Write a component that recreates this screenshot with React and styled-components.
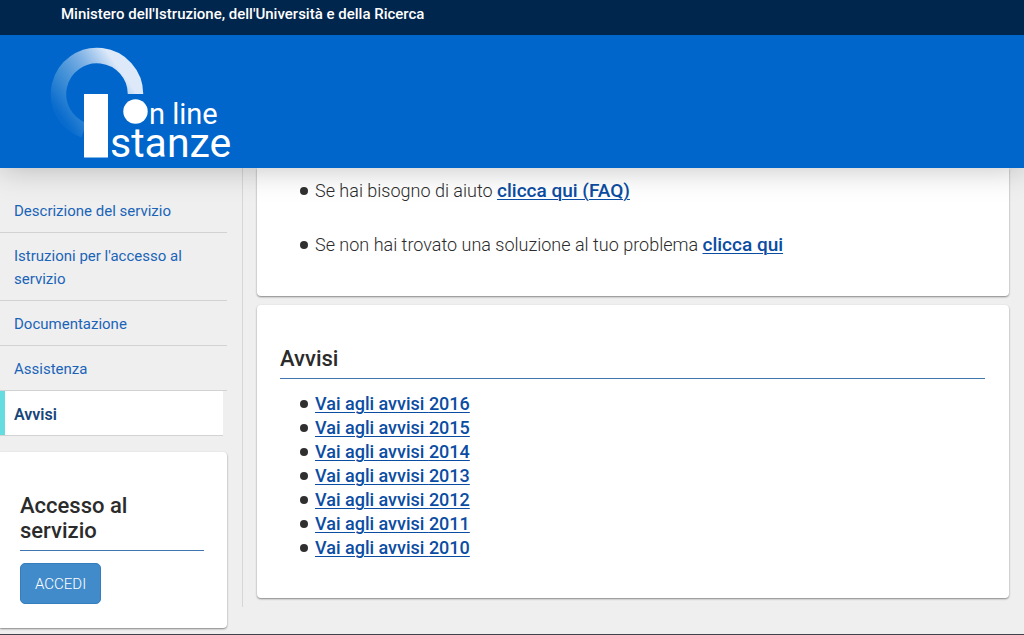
import React from 'react'
import styled, { createGlobalStyle, css } from 'styled-components'

const menu = [
    { label: 'Descrizione del servizio', href: '#descrizione' },
    { label: "Istruzioni per l'accesso al servizio", href: '#istruzioni' },
    { label: 'Documentazione', href: '#documentazione' },
    { label: 'Assistenza', href: '#assistenza' },
    { label: 'Avvisi', href: '#avvisi', active: true },
]

const years = [2016, 2015, 2014, 2013, 2012, 2011, 2010]

const App = () => {
    return (
        <Page>
            <GlobalStyle />
            <TopBar>Ministero dell'Istruzione, dell'Università e della Ricerca</TopBar>
            <Header>
                <Logo />
            </Header>
            <Layout>
                <Sidebar>
                    <nav>
                        <Menu>
                            {menu.map(({ label, href, active }) => (
                                <MenuItem key={href}>
                                    <MenuLink href={href} $active={active}>{label}</MenuLink>
                                </MenuItem>
                            ))}
                        </Menu>
                    </nav>
                    <AccessCard>
                        <Title>Accesso al servizio</Title>
                        <Button type="button">ACCEDI</Button>
                    </AccessCard>
                </Sidebar>
                <Main>
                    <HelpCard>
                        <HelpList>
                            <li>Se hai bisogno di aiuto <HelpLink href="#faq">clicca qui (FAQ)</HelpLink></li>
                            <li>Se non hai trovato una soluzione al tuo problema <HelpLink href="#contatti">clicca qui</HelpLink></li>
                        </HelpList>
                    </HelpCard>
                    <NewsCard id="avvisi">
                        <Title>Avvisi</Title>
                        <NewsList>
                            {years.map(year => (
                                <li key={year}>
                                    <Link href={`#avvisi-${year}`}>Vai agli avvisi {year}</Link>
                                </li>
                            ))}
                        </NewsList>
                    </NewsCard>
                </Main>
            </Layout>
            <Footer />
        </Page>
    )
}

const Logo = () => (
    <LogoSvg viewBox="0 0 190 121" role="img" aria-label="Istanze on line">
        <defs>
            <linearGradient id="ring" gradientUnits="userSpaceOnUse" x1="88" y1="48" x2="26" y2="92">
                <stop offset="0" stopColor="#e9f0fb" stopOpacity="0.95" />
                <stop offset="0.35" stopColor="#a9cbee" stopOpacity="0.72" />
                <stop offset="0.7" stopColor="#7fb8e0" stopOpacity="0.45" />
                <stop offset="1" stopColor="#7fb8e0" stopOpacity="0.06" />
            </linearGradient>
        </defs>
        <path d="M85.5 47A38.5 38.5 0 1 0 34 83.3" fill="none" stroke="url(#ring)" strokeWidth="15.5" />
        <rect x="34" y="47" width="24" height="63.5" fill="#fff" />
        <circle cx="85.5" cy="64.5" r="12.2" fill="#fff" />
        <LogoText x="99" y="77" fontSize="29">n line</LogoText>
        <LogoText x="60" y="110" fontSize="41">stanze</LogoText>
    </LogoSvg>
)

const GlobalStyle = createGlobalStyle`
    * {
        box-sizing: border-box;
    }
    body {
        margin: 0;
        background: #efefef;
        color: #2b2b2b;
        font-family: Roboto, "Open Sans", sans-serif;
        font-size: 15px;
    }
`
const Page = styled.div`
    display: flex;
    flex-direction: column;
    min-height: 100vh;
`
const TopBar = styled.div`
    position: relative;
    z-index: 2;
    padding: 4px 61px 11px;
    background: #00264d;
    color: #fff;
    font-weight: 500;
    line-height: 20px;
`
const Header = styled.header`
    position: relative;
    z-index: 1;
    padding: 12px 50px 0;
    background: #0066cc;
    box-shadow: 0 0 30px rgba(0, 0, 0, 0.25);
`
const LogoSvg = styled.svg`
    display: block;
    width: 190px;
    height: 121px;
`
const LogoText = styled.text`
    fill: #fff;
    font-family: Roboto, sans-serif;
`
const Layout = styled.div`
    display: grid;
    grid-template-columns: 242px 1fr;
    flex: 1;
`
const Sidebar = styled.aside`
    align-self: start;
    padding: 20px 15px 0 0;
`
const Menu = styled.ul`
    margin: 0 0 16px;
    padding: 0;
    list-style: none;
`
const MenuItem = styled.li`
    border-bottom: 1px solid #d2d2d2;
    &:last-child {
        margin-right: 4px;
    }
`
const MenuLink = styled.a`
    display: block;
    padding: 12px 14px 9px;
    color: #1a64b8;
    line-height: 23px;
    text-decoration: none;
    ${p => p.$active && css`
        padding-left: 9px;
        border-left: 5px solid #65dcdf;
        background: #fff;
        color: #17457a;
        font-size: 16px;
        font-weight: 600;
    `}
`
const Card = styled.section`
    border-radius: 4px;
    background: #fff;
    box-shadow: 0 1px 2px rgba(0, 0, 0, 0.45);
`
const AccessCard = styled(Card)`
    padding: 41px 23px 24px 20px;
    border-radius: 0 4px 4px 0;
`
const Title = styled.h2`
    margin: 0;
    padding-bottom: 7px;
    border-bottom: 1px solid #3e76ad;
    font-size: 22px;
    font-weight: 500;
    line-height: 25px;
`
const Button = styled.button`
    height: 41px;
    margin-top: 12px;
    padding: 0 14px;
    border: 1px solid #357ebd;
    border-radius: 5px;
    background: #428bca;
    color: #fff;
    font: 300 15px Roboto, sans-serif;
    cursor: pointer;
`
const Main = styled.main`
    display: flex;
    flex-direction: column;
    gap: 9px;
    align-self: start;
    padding: 0 15px 9px 14px;
    border-left: 1px solid #d6d6d6;
`
const HelpCard = styled(Card)`
    padding: 9px 24px 37px 23px;
    border-radius: 0 0 4px 4px;
`
const NewsCard = styled(Card)`
    padding: 41px 24px 38px 23px;
`
const List = styled.ul`
    display: flex;
    flex-direction: column;
    margin: 0;
    padding: 0 0 0 20px;
    font-size: 18px;
    list-style: none;
    li::before {
        content: '';
        display: inline-block;
        width: 8px;
        height: 8px;
        margin-right: 7px;
        border-radius: 50%;
        background: #303030;
        vertical-align: 2px;
    }
`
const HelpList = styled(List)`
    gap: 26px;
    font-weight: 300;
    line-height: 28px;
`
const NewsList = styled(List)`
    margin-top: 13px;
    line-height: 24px;
`
const Link = styled.a`
    color: #0b4da2;
    font-weight: 500;
    text-decoration-thickness: 1px;
    text-underline-offset: 2px;
`
const HelpLink = styled(Link)`
    font-size: 19px;
`
const Footer = styled.footer`
    height: 1px;
    background: #3f4248;
`

export default App
